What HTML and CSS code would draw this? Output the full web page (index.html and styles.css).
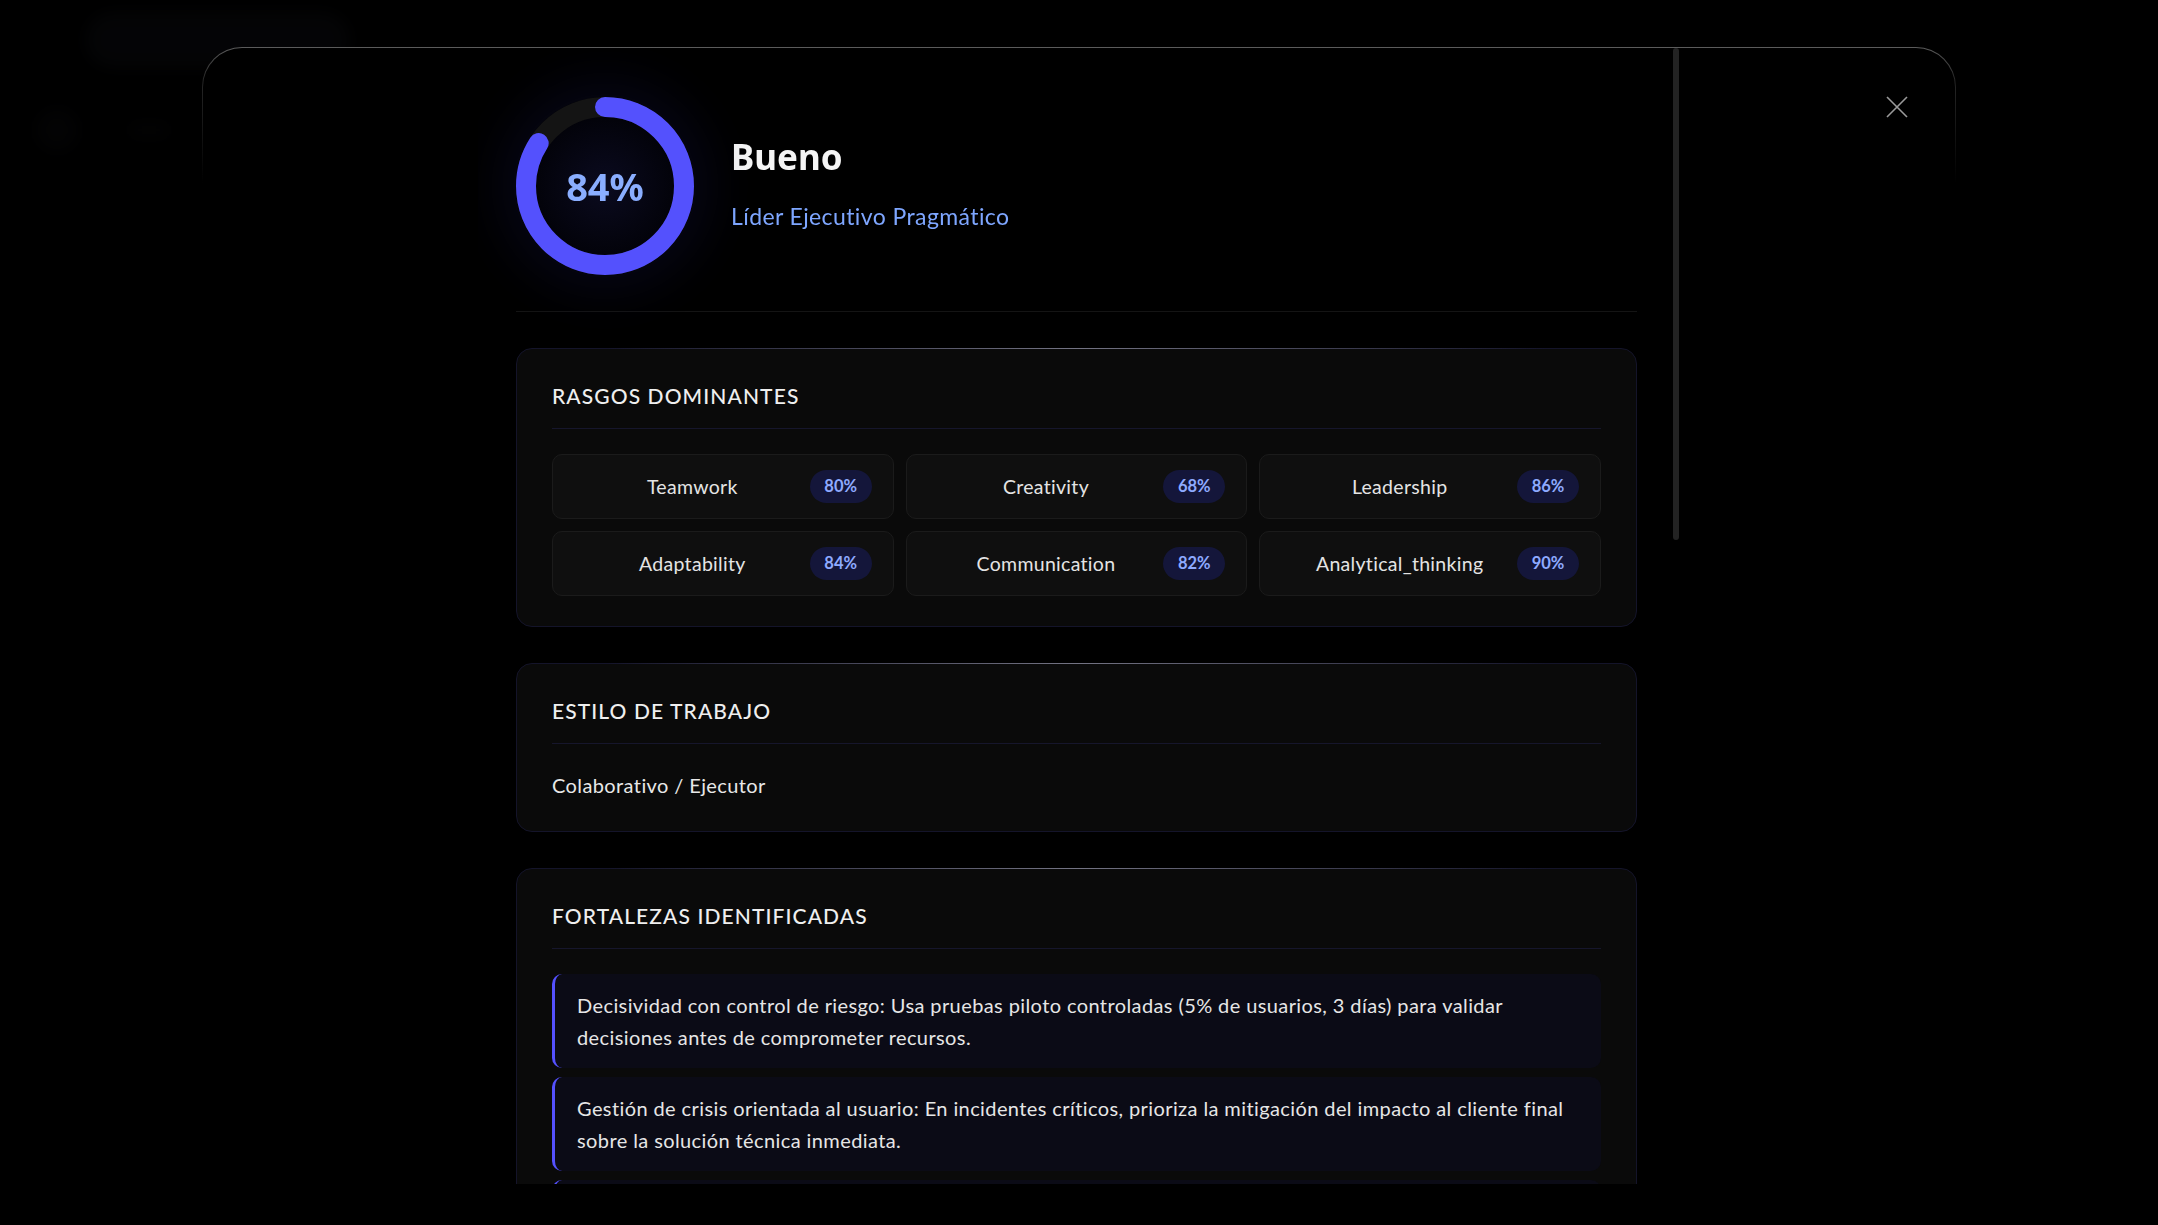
FILE: index.html
```html
<!DOCTYPE html>
<html lang="es">
<head>
    <meta charset="UTF-8">
    <meta name="viewport" content="width=device-width, initial-scale=1.0">
    <title>Resultado de evaluación</title>
    <link rel="stylesheet" href="styles.css">
</head>
<body>
    <div class="page-behind">
        <div class="ghost-pill"></div>
        <div class="ghost-row">
            <div class="ghost-dot"></div>
            <div class="ghost-text"></div>
        </div>
    </div>

    <div class="overlay">
        <div class="modal">
            <button class="close-btn" aria-label="Cerrar">
                <svg width="22" height="22" viewBox="0 0 22 22"><path d="M1 1 L21 21 M21 1 L1 21" stroke="#9a9a9a" stroke-width="1.6" fill="none"/></svg>
            </button>
            <div class="scroll-thumb"></div>

            <div class="scroll">
                <div class="content">
                    <div class="result-head">
                        <div class="score-ring">
                            <svg width="178" height="178" viewBox="0 0 178 178">
                                <circle cx="89" cy="89" r="79" fill="none" stroke="#141414" stroke-width="20"/>
                                <circle cx="89" cy="89" r="79" fill="none" stroke="#5451fd" stroke-width="20" stroke-linecap="round" stroke-dasharray="417 497" transform="rotate(-90 89 89)"/>
                            </svg>
                            <span class="score-value">84%</span>
                        </div>
                        <div class="result-title">
                            <h1>Bueno</h1>
                            <p class="profile">Líder Ejecutivo Pragmático</p>
                        </div>
                    </div>

                    <section class="card">
                        <h3>Rasgos dominantes</h3>
                        <div class="traits">
                            <div class="trait"><span class="trait-name">Teamwork</span><span class="badge">80%</span></div>
                            <div class="trait"><span class="trait-name">Creativity</span><span class="badge">68%</span></div>
                            <div class="trait"><span class="trait-name">Leadership</span><span class="badge">86%</span></div>
                            <div class="trait"><span class="trait-name">Adaptability</span><span class="badge">84%</span></div>
                            <div class="trait"><span class="trait-name">Communication</span><span class="badge">82%</span></div>
                            <div class="trait"><span class="trait-name">Analytical_thinking</span><span class="badge">90%</span></div>
                        </div>
                    </section>

                    <section class="card">
                        <h3>Estilo de trabajo</h3>
                        <p class="plain">Colaborativo / Ejecutor</p>
                    </section>

                    <section class="card">
                        <h3>Fortalezas identificadas</h3>
                        <div class="item">Decisividad con control de riesgo: Usa pruebas piloto controladas (5% de usuarios, 3 días) para validar decisiones antes de comprometer recursos.</div>
                        <div class="item">Gestión de crisis orientada al usuario: En incidentes críticos, prioriza la mitigación del impacto al cliente final sobre la solución técnica inmediata.</div>
                        <div class="item">Comunicación transparente con stakeholders: Mantiene informados a los equipos y a la dirección durante todo el proceso de decisión.</div>
                        <div class="item">Orientación a resultados medibles: Define métricas claras de éxito antes de iniciar cada iniciativa y da seguimiento constante.</div>
                    </section>

                    <section class="card">
                        <h3>Áreas de desarrollo</h3>
                        <div class="item">Delegación estratégica: Tiende a involucrarse en detalles operativos que podrían ser asumidos por el equipo.</div>
                        <div class="item">Exploración creativa: Podría dedicar más espacio a alternativas innovadoras antes de optar por la solución conocida.</div>
                        <div class="item">Gestión del tiempo en crisis: Mantener pausas de reflexión breves antes de escalar decisiones de alto impacto.</div>
                    </section>

                    <section class="card">
                        <h3>Recomendaciones</h3>
                        <div class="item">Establecer rituales de delegación semanales con responsables claros y criterios de autonomía definidos.</div>
                        <div class="item">Reservar sesiones de ideación con el equipo para evaluar al menos dos alternativas por cada decisión relevante.</div>
                        <div class="item">Documentar los aprendizajes de cada incidente crítico y compartirlos con toda la organización.</div>
                    </section>
                </div>
            </div>
        </div>
    </div>
</body>
</html>
```

FILE: styles.css
```css
* { box-sizing: border-box; }
html, body { margin: 0; padding: 0; height: 100%; }
body { background: #000; color: #e8e8e8; font-family: 'Lato', 'Noto Sans', sans-serif; overflow: hidden; }

/* page underneath the modal, blurred */
.page-behind { padding: 12px 0 0 85px; filter: blur(8px); opacity: 0.25; }
.ghost-pill { width: 265px; height: 56px; border-radius: 28px; background: #121318; }
.ghost-row { display: flex; align-items: center; gap: 50px; margin: 40px 0 0 -50px; }
.ghost-dot { width: 44px; height: 44px; border-radius: 50%; background: #0d0d10; }
.ghost-text { width: 40px; height: 14px; background: #0d0d10; }

.overlay { position: fixed; inset: 0; display: flex; justify-content: center; padding-top: 47px; }
.modal {
    position: relative;
    width: 1754px;
    height: 1138px;
    border-radius: 40px;
    border: 1px solid transparent;
    background: linear-gradient(#000, #000) padding-box,
                linear-gradient(180deg, #5c5c5c 0%, #262626 3%, rgba(30, 30, 30, 0) 12%) border-box;
    overflow: hidden;
}
.close-btn { position: absolute; top: 48px; right: 47px; background: none; border: 0; padding: 0; width: 22px; height: 22px; cursor: pointer; z-index: 2; }
.scroll-thumb { position: absolute; top: 0; right: 276px; width: 6px; height: 492px; border-radius: 3px; background: #232323; z-index: 2; }

.scroll { width: 1202px; height: 100%; margin: 0 auto; overflow-y: auto; scrollbar-width: none; }
.scroll::-webkit-scrollbar { display: none; }
.content { padding: 49px 43px 50px 38px; }

.result-head { display: flex; align-items: center; gap: 37px; padding-bottom: 36px; border-bottom: 1px solid #141414; margin-bottom: 36px; }
.score-ring { position: relative; width: 178px; height: 178px; border-radius: 50%; flex-shrink: 0; background: radial-gradient(circle, rgba(30, 30, 90, 0.35) 0%, rgba(10, 10, 40, 0.2) 60%, transparent 72%); box-shadow: 0 0 50px 16px rgba(40, 40, 150, 0.14); }
.score-ring svg { display: block; }
.score-value { position: absolute; inset: 0; display: flex; align-items: center; justify-content: center; font-family: 'Noto Sans', sans-serif; font-weight: 700; font-size: 38px; color: #8aaeff; }
.result-title { padding-bottom: 6px; }
.result-title h1 { margin: 0 0 24px; font-family: 'Noto Sans', sans-serif; font-size: 35px; line-height: 42px; font-weight: 700; color: #f4f4f4; }
.profile { margin: 0; font-size: 23px; line-height: 28px; letter-spacing: 0.4px; color: #7ea6ff; }

.card { position: relative; background: #0a0a0a; border: 1px solid #14142a; border-radius: 16px; padding: 33px 35px 30px 35px; margin-bottom: 36px; }
.card::before { content: ""; position: absolute; top: -1px; left: 8%; right: 8%; height: 1px; background: linear-gradient(90deg, transparent, rgba(210, 210, 220, 0.5), transparent); }
.card h3 { margin: 0 0 25px; padding-bottom: 18px; border-bottom: 1px solid #16162c; font-size: 21px; line-height: 28px; font-weight: 500; letter-spacing: 1.1px; text-transform: uppercase; color: #efefef; }

.traits { display: grid; grid-template-columns: repeat(3, 1fr); gap: 12px; }
.trait { display: flex; align-items: center; padding: 15px 21px 15px 22px; background: #0f0f0f; border: 1px solid #1b1b1b; border-radius: 10px; }
.trait-name { flex: 1; text-align: center; font-size: 19.5px; letter-spacing: 0.3px; color: #e4e4e4; }
.badge { min-width: 62px; text-align: center; padding: 6px 10px; border-radius: 17px; background: #14163a; color: #8eaaff; font-size: 16.5px; line-height: 21px; font-weight: 700; }

.plain { margin: 0; font-size: 20px; line-height: 32px; letter-spacing: 0.4px; color: #e8e8e8; }

.item { padding: 15px 22px; margin-bottom: 9px; background: #0b0b16; border-left: 3px solid #5551ff; border-radius: 10px; font-size: 20px; line-height: 32px; letter-spacing: 0.4px; color: #e6e6e6; }
.item:last-child { margin-bottom: 0; }
```
